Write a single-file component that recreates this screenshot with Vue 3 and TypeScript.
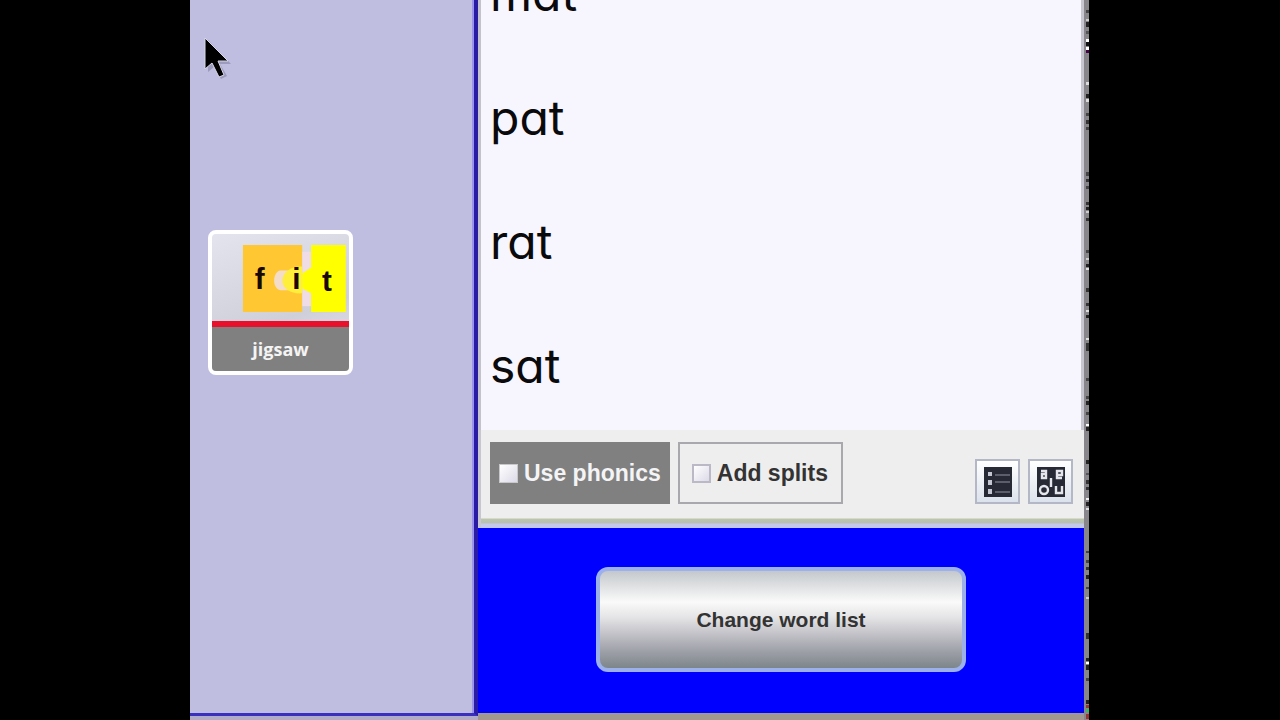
<script setup lang="ts">
import { ref } from 'vue'

const words: string[] = ['mat', 'pat', 'rat', 'sat']
const usePhonics = ref(false)
const addSplits = ref(false)

interface Speck { y: number; h: number; c: string }
const specks: Speck[] = [
  [10, 3, '#444'], [19, 2, '#ccc'], [22, 5, '#222'], [31, 3, '#555'], [39, 3, '#fff'], [42, 4, '#111'], [47, 3, '#fff'],
  [50, 3, '#404'], [82, 3, '#ddd'], [94, 4, '#222'], [99, 3, '#ddd'], [113, 3, '#444'], [120, 4, '#333'],
  [127, 3, '#444'], [172, 4, '#444'], [179, 3, '#333'], [186, 3, '#444'], [202, 3, '#333'], [207, 3, '#222'],
  [211, 2, '#ccc'], [218, 3, '#333'], [250, 3, '#444'], [258, 2, '#ccc'], [264, 3, '#222'], [268, 2, '#ddd'],
  [288, 4, '#333'], [303, 3, '#333'], [310, 2, '#ddd'], [315, 3, '#222'], [338, 2, '#ddd'], [343, 8, '#333'],
  [378, 3, '#444'], [396, 3, '#444'], [401, 4, '#222'], [412, 3, '#444'], [424, 2, '#fff'], [427, 4, '#222'],
  [460, 4, '#222'], [473, 2, '#555'], [480, 4, '#333'], [487, 3, '#333'], [498, 2, '#eee'], [502, 4, '#222'],
  [508, 2, '#ddd'], [551, 2, '#444'], [560, 3, '#444'], [567, 3, '#333'], [575, 4, '#222'], [587, 2, '#444'],
  [597, 2, '#ccc'], [633, 6, '#333'], [658, 3, '#222'], [662, 2, '#fff'], [665, 5, '#222'], [678, 3, '#444'],
  [700, 4, '#222'], [705, 3, '#933'], [709, 3, '#3b6'], [714, 5, '#933'],
].map(([y, h, c]) => ({ y: y as number, h: h as number, c: c as string }))
</script>

<template>
  <div class="stage">
    <main class="app">
      <aside class="activities">
        <svg class="pointer" viewBox="0 0 32 46" aria-hidden="true">
          <path d="M6 4V36L12 31L19 43L25 40L18 28H29Z" fill="#77759a" opacity=".5" />
          <path d="M3 2V33L10 27L17 41L22 39L16 25H26Z" fill="#000" stroke="#d8d8ea" stroke-width="1" />
        </svg>
        <button class="tile" type="button">
          <svg class="puzzle" viewBox="0 0 136 88" aria-hidden="true">
            <path d="M30 11H90V79H30Z" fill="#ffc832" />
            <path d="M90 18H99V73H90Z" fill="#efdce4" />
            <path d="M77 37H68C60 38 59 55 68 57H77C68 52 69 42 77 37Z" fill="#f3ddc8" />
            <path d="M90 33C80 32 70 38 70 47C70 56 80 61 90 60Z" fill="#ffee3a" />
            <path d="M99 11H134V79H99V60L90 55V40L99 34Z" fill="#ff0" />
            <g class="letters">
              <text x="42" y="56">f</text>
              <text x="80" y="56">i</text>
              <text x="110" y="58">t</text>
            </g>
          </svg>
          <span class="caption">jigsaw</span>
        </button>
      </aside>
      <section class="editor">
        <ul class="words">
          <li v-for="word in words" :key="word">{{ word }}</li>
        </ul>
        <div class="toolbar">
          <label class="toggle dark"><input v-model="usePhonics" type="checkbox" />Use phonics</label>
          <label class="toggle"><input v-model="addSplits" type="checkbox" />Add splits</label>
          <div class="tools">
            <button type="button" aria-label="List view">
              <svg viewBox="0 0 30 30">
                <path d="M1 0H29V30H1Z" fill="#272a35" />
                <path d="M5 5H9V9H5ZM5 13H9V18H5ZM5 22H9V27H5Z" fill="#c4c7d2" />
                <path d="M12 8H27M12 15H27M12 25H27" stroke="#5c5f6b" stroke-width="2" />
              </svg>
            </button>
            <button type="button" aria-label="Vowel grid">
              <svg viewBox="0 0 30 30">
                <path d="M1 0H29V30H1Z" fill="#272a35" />
                <g fill="none" stroke="#e4e6ec" stroke-width="2.4">
                  <path d="M5 4H10V11H6V7H10M21 8H26V4H21V11H26" />
                  <path d="M15 11V20" />
                  <circle cx="8" cy="23" r="4" />
                  <path d="M20 19V26H26V19" />
                </g>
              </svg>
            </button>
          </div>
        </div>
        <footer class="footer">
          <button class="change" type="button">Change word list</button>
        </footer>
      </section>
      <svg class="edge" viewBox="0 0 6 720" preserveAspectRatio="none" aria-hidden="true">
        <rect width="5" height="720" fill="#88868a" />
        <rect v-for="s in specks" :key="s.y" x="2" :y="s.y" width="3" :height="s.h" :fill="s.c" />
      </svg>
    </main>
  </div>
</template>

<style>
body { margin: 0; background: #000; }
</style>

<style scoped>
* { box-sizing: border-box; }
.stage {
  display: grid;
  grid-template-columns: 19fr 90fr 19fr;
  height: 100vh;
  overflow: hidden;
  background: #000;
}
.app {
  grid-column: 2;
  display: grid;
  grid-template-columns: 288px minmax(0, 1fr) 6px;
  min-height: 0;
  font-family: "Liberation Sans", Arial, sans-serif;
}
.activities {
  position: relative;
  margin-bottom: 4px;
  padding: 230px 0 0 18px;
  background: #c0bee0;
  border-right: 4px solid #2a1ca4;
  border-bottom: 3px solid #3a30c0;
  box-shadow: inset -2px 0 #9a94ec, 0 4px #b0acc8;
}
.pointer { position: absolute; left: 12px; top: 36px; width: 32px; height: 46px; }
.tile {
  display: flex;
  flex-direction: column;
  width: 145px;
  height: 145px;
  padding: 0;
  overflow: hidden;
  border: 4px solid #fff;
  border-radius: 8px;
  background: linear-gradient(160deg, #e4e4ee, #cfcfda 60%, #e8e4ee);
}
.puzzle { display: block; width: 100%; height: 88px; }
.letters { font: bold 30px "Liberation Sans", Arial, sans-serif; fill: #180800; }
.caption {
  flex: 1;
  width: 100%;
  border-top: 6px solid #e8102a;
  background: #808080;
  color: #f4f4f4;
  font: bold 18px/44px "Open Sans", sans-serif;
  text-align: center;
}
.editor {
  display: flex;
  flex-direction: column;
  min-height: 0;
  border-bottom: 7px solid #a09890;
}
.words {
  flex: 1;
  display: flex;
  flex-direction: column;
  justify-content: flex-end;
  min-height: 0;
  margin: 0;
  padding: 0 0 2px 9px;
  overflow: hidden;
  list-style: none;
  background: #f7f6ff;
  border-left: 3px solid #c4c2cc;
  border-right: 3px solid #c8c6d0;
  color: #0a0a0c;
  font: 48px/124px Inter, sans-serif;
  font-feature-settings: "cv11" 1;
}
.words li { flex: none; }
.toolbar {
  display: flex;
  gap: 8px;
  height: 98px;
  padding: 12px 11px 0 9px;
  border-left: 3px solid #c8c6d0;
  background: linear-gradient(#eee 88px, #bcc6ac 89px, #b8c0b4 93px, #c4c8ec 94px);
}
.toggle {
  display: flex;
  align-items: center;
  gap: 6px;
  height: 62px;
  padding: 0 13px 0 12px;
  border: 2px solid #a9a9ad;
  color: #333;
  font-size: 23px;
  font-weight: bold;
  white-space: nowrap;
}
.toggle.dark { padding: 0 7px; border-color: #808080; background: #808080; color: #f4f4f6; }
.toggle input {
  appearance: none;
  flex: none;
  width: 19px;
  height: 19px;
  margin: 0;
  border: 2px solid #bbb9c6;
  background: linear-gradient(135deg, #fff, #dcdae8);
}
.toggle.dark input { border: 1px solid #c8c8ca; }
.tools { display: flex; gap: 8px; margin: 17px 0 0 auto; }
.tools button {
  display: grid;
  place-items: center;
  width: 45px;
  height: 45px;
  padding: 0;
  border: 2px solid #b4b8c6;
  background: linear-gradient(#fff, #dce2ec);
}
.tools svg { width: 30px; height: 30px; }
.footer { display: flex; justify-content: center; height: 185px; padding-top: 39px; background: #00f; }
.change {
  width: 61%;
  height: 105px;
  padding: 0;
  border: 4px solid #9cb0ec;
  border-radius: 12px;
  background: linear-gradient(#c4c8cc, #dcdee0 14%, #fafafa 32%, #e4e4e6 48%, #c0c0c6 66%, #9c9ea6 84%, #7c868a);
  color: #333;
  font: bold 21px "Liberation Sans", Arial, sans-serif;
}
.edge { width: 6px; height: 100%; }
</style>
